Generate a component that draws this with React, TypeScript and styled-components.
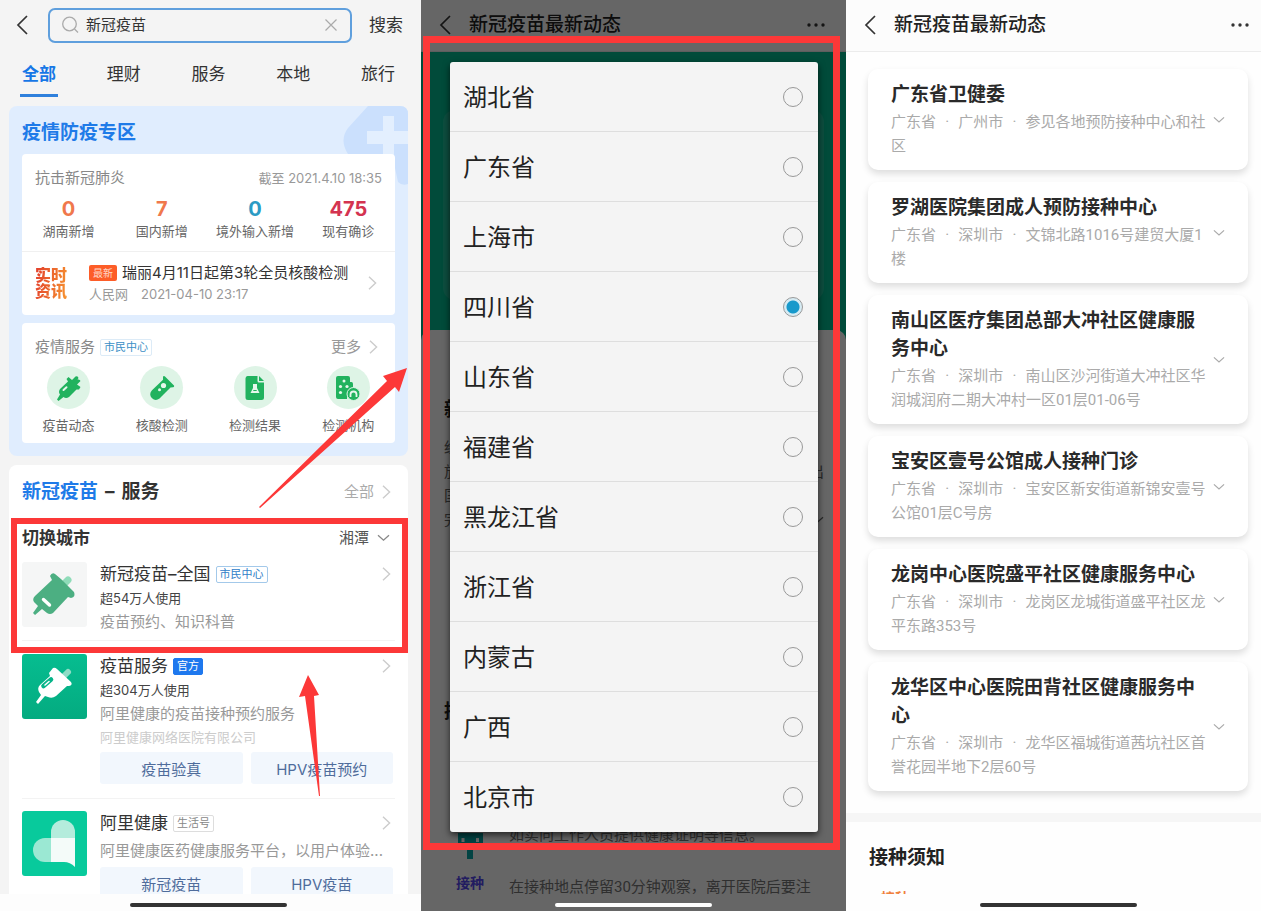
import React from "react";
import styled, { createGlobalStyle } from "styled-components";

const RED = "#fc3838";

const GlobalStyle = createGlobalStyle`
  * { box-sizing: border-box; }
  body { margin: 0; background: #fff; }
  button, input { font: inherit; color: inherit; }
  button { border: 0; padding: 0; background: none; cursor: pointer; }
  h1, h2, h3, p, fieldset { margin: 0; padding: 0; border: 0; }
  a { color: inherit; text-decoration: none; }
  svg { display: block; flex-shrink: 0; }
`;

const Board = styled.main`
  display: grid;
  grid-template-columns: 421fr 425fr 415fr;
  height: 100vh;
  overflow: hidden;
  font-family: Roboto, "Noto Sans CJK SC", sans-serif;
`;

const Screen = styled.section<{ $bg: string; $round?: boolean }>`
  position: relative;
  display: flex;
  flex-direction: column;
  min-width: 0;
  min-height: 0;
  overflow: hidden;
  background: ${(p) => p.$bg};
  font-family: ${(p) => (p.$round ? 'Inter, "Noto Sans CJK SC", sans-serif' : "inherit")};
`;

const ScreenBody = styled.div`
  flex: 1;
  min-height: 0;
  overflow: hidden;
`;

const HomeArea = styled.div<{ $bg?: string; $pad?: string }>`
  position: relative;
  z-index: 3;
  flex-shrink: 0;
  display: flex;
  align-items: center;
  justify-content: center;
  height: 17px;
  padding: ${(p) => p.$pad ?? "5px 0 0"};
  background: ${(p) => p.$bg ?? "transparent"};
`;

const HomeBar = styled.div<{ $color: string }>`
  width: 157px;
  height: 4px;
  border-radius: 2px;
  background: ${(p) => p.$color};
`;

/* ---------- search screen ---------- */

const SearchHeader = styled.header`
  display: flex;
  align-items: center;
  height: 50px;
  padding: 0 18px 0 16px;
`;

const SearchField = styled.label`
  flex: 1;
  min-width: 0;
  display: flex;
  align-items: center;
  gap: 7px;
  height: 35px;
  margin: 0 17px 0 20px;
  padding: 0 13px 0 12px;
  border: 2px solid #5f9fdd;
  border-radius: 7px;
`;

const SearchInput = styled.input`
  flex: 1;
  min-width: 0;
  border: 0;
  padding: 0;
  outline: 0;
  background: none;
  font-size: 15px;
  line-height: 24px;
  color: #333;
`;

const SearchButton = styled.button`
  font-size: 17px;
  line-height: 24px;
  color: #333;
`;

const Tabs = styled.nav`
  display: flex;
  justify-content: space-between;
  padding: 0 24px 0 20px;
`;

const Tab = styled.button<{ $active?: boolean }>`
  width: 38px;
  padding-top: 5px;
  font-size: 17px;
  line-height: 39px;
  white-space: nowrap;
  display: flex;
  justify-content: center;
  color: ${(p) => (p.$active ? "#1677e6" : "#333")};
  font-weight: ${(p) => (p.$active ? 700 : 400)};
  border-bottom: 3px solid ${(p) => (p.$active ? "#2f80dc" : "transparent")};
`;

const Panel = styled.section<{ $bg: string; $top: number }>`
  position: relative;
  margin: ${(p) => p.$top}px 13px 0 9px;
  padding: 13px;
  border-radius: 8px;
  background: ${(p) => p.$bg};
`;

const PanelDeco = styled.svg`
  position: absolute;
  top: 0;
  right: 0;
`;

const PanelTitle = styled.h2<{ $color?: string }>`
  position: relative;
  display: flex;
  gap: 7px;
  font-size: 19px;
  line-height: 28px;
  font-weight: 700;
  color: ${(p) => p.$color ?? "#333"};
`;

const Blue = styled.span`
  color: #1f7be8;
`;

const Card = styled.div<{ $top: number }>`
  position: relative;
  margin-top: ${(p) => p.$top}px;
  padding-top: 12px;
  border-radius: 4px;
  background: #fff;
`;

const Row = styled.div<{ $pad?: string }>`
  display: flex;
  align-items: center;
  justify-content: space-between;
  padding: ${(p) => p.$pad ?? "0"};
`;

const Inline = styled.div<{ $gap?: number }>`
  display: flex;
  align-items: center;
  gap: ${(p) => p.$gap ?? 5}px;
`;

const Text = styled.span<{ $size: number; $color: string; $line?: number; $bold?: boolean }>`
  font-size: ${(p) => p.$size}px;
  line-height: ${(p) => p.$line ?? 24}px;
  color: ${(p) => p.$color};
  font-weight: ${(p) => (p.$bold ? 700 : 400)};
  white-space: nowrap;
`;

const LinkRow = styled.a<{ $color: string }>`
  display: flex;
  align-items: center;
  gap: 8px;
  font-size: 15px;
  line-height: 24px;
  color: ${(p) => p.$color};
`;

const Four = styled.div<{ $pad: string }>`
  display: grid;
  grid-template-columns: repeat(4, 1fr);
  justify-items: center;
  padding: ${(p) => p.$pad};
`;

const Stat = styled.div<{ $color: string }>`
  display: flex;
  flex-direction: column;
  align-items: center;
  font-size: 13px;
  line-height: 20px;
  color: #666;
  white-space: nowrap;
  strong {
    font-size: 20px;
    line-height: 24px;
    font-weight: 700;
    color: ${(p) => p.$color};
  }
`;

const News = styled.a`
  display: flex;
  align-items: center;
  height: 64px;
  padding: 0 18px 2px 13px;
  border-top: 1px solid #f0f0f0;
`;

const NewsLogo = styled.div`
  width: 33px;
  margin-right: 21px;
  font-size: 16px;
  line-height: 16px;
  font-weight: 900;
  color: transparent;
  background: linear-gradient(100deg, #e23d2c, #f7962f);
  background-clip: text;
  -webkit-background-clip: text;
`;

const NewsText = styled.div`
  flex: 1;
  min-width: 0;
  display: flex;
  flex-direction: column;
`;

const HotTag = styled.span`
  width: 28px;
  border-radius: 2px;
  background: #fd5d28;
  color: #ffd9c8;
  font-size: 10px;
  line-height: 16px;
  text-align: center;
`;

const Tag = styled.span<{ $tone: "light" | "blue" | "solid" | "grey" }>`
  padding: 0 3px;
  border: 1px solid
    ${(p) => ({ light: "#dcebf7", blue: "#a3c9ea", solid: "#1e78ee", grey: "#ddd" })[p.$tone]};
  border-radius: 2px;
  background: ${(p) => (p.$tone === "solid" ? "#1e78ee" : "#fff")};
  color: ${(p) => ({ light: "#3a8fc6", blue: "#2f80c8", solid: "#fff", grey: "#888" })[p.$tone]};
  font-size: 11px;
  line-height: 15px;
  white-space: nowrap;
`;

const Service = styled.a`
  display: flex;
  flex-direction: column;
  align-items: center;
  gap: 6px;
  font-size: 13px;
  line-height: 20px;
  color: #666;
`;

const Disc = styled.span`
  display: grid;
  place-items: center;
  width: 43px;
  height: 43px;
  border-radius: 50%;
  background: #def4e6;
`;

const CitySection = styled.div`
  position: relative;
  margin-top: 20px;
`;

const CityFrame = styled.div`
  position: absolute;
  inset: -8px -13px -12px -11px;
  z-index: 2;
  border: 6px solid ${RED};
  pointer-events: none;
`;

const Item = styled.article<{ $pad: string; $line?: boolean }>`
  display: flex;
  align-items: flex-start;
  gap: 13px;
  padding: ${(p) => p.$pad};
  border-bottom: ${(p) => (p.$line ? "1px solid #f3f3f3" : "0")};
`;

const ItemBody = styled.div`
  flex: 1;
  min-width: 0;
  display: flex;
  flex-direction: column;
`;

const Desc = styled.p<{ $top?: number }>`
  margin-top: ${(p) => p.$top ?? 0}px;
  font-size: 15px;
  line-height: 24px;
  color: #999;
  white-space: nowrap;
`;

const Actions = styled.div`
  display: grid;
  grid-template-columns: 1fr 1fr;
  gap: 8px;
  margin: 4px 2px 0 0;
`;

const Action = styled.button`
  height: 32px;
  border-radius: 3px;
  background: #f2f7fd;
  color: #4f6c9b;
  font-size: 15px;
`;

const Arrow = styled.svg<{ $x: number; $y: number }>`
  position: absolute;
  z-index: 4;
  left: ${(p) => p.$x}px;
  top: ${(p) => p.$y}px;
  pointer-events: none;
`;

/* ---------- vaccine news screens ---------- */

const TitleBar = styled.header<{ $bg: string; $right: number }>`
  flex-shrink: 0;
  display: flex;
  align-items: center;
  height: 52px;
  padding: 0 ${(p) => p.$right}px 1px 18px;
  border-bottom: 1px solid #ececec;
  background: ${(p) => p.$bg};
`;

const BarTitle = styled.h1`
  flex: 1;
  margin-left: 18px;
  font-size: 19px;
  line-height: 28px;
  font-weight: 500;
  color: #222;
`;

const Hero = styled.div`
  height: 290px;
  padding: 58px 22px 0;
  background: #03bc91;
`;

const HeroCard = styled.div`
  height: 190px;
  border-radius: 12px;
  background: rgba(255, 255, 255, 0.12);
`;

const Sheet = styled.div`
  position: relative;
  margin-top: -12px;
  padding: 66px 22px 0 23px;
  border-radius: 10px 10px 0 0;
  background: #fff;
`;

const SheetHeading = styled.h2<{ $top?: number }>`
  margin-top: ${(p) => p.$top ?? 0}px;
  font-size: 19px;
  line-height: 28px;
  font-weight: 700;
  color: #222;
`;

const SheetText = styled.div`
  margin-top: 12px;
`;

const SheetLine = styled.p`
  display: flex;
  align-items: center;
  justify-content: space-between;
  font-size: 15px;
  line-height: 24px;
  color: #666;
`;

const Notice = styled.div<{ $top: number }>`
  display: flex;
  align-items: flex-start;
  gap: 24px;
  margin-top: ${(p) => p.$top}px;
  padding-left: 12px;
  font-size: 15px;
  line-height: 24px;
  color: #777;
  white-space: nowrap;
`;

const NoticeMark = styled.span<{ $color: string }>`
  width: 29px;
  font-size: 14px;
  line-height: 16px;
  font-weight: 700;
  color: ${(p) => p.$color};
`;

const Dim = styled.div`
  position: absolute;
  inset: 0;
  z-index: 1;
  background: rgba(0, 0, 0, 0.6);
`;

const DialogFrame = styled.div`
  position: absolute;
  z-index: 2;
  top: 36px;
  left: 2px;
  right: 6px;
  padding: 19px 15px 11px 20px;
  border: 7px solid ${RED};
`;

const Dialog = styled.fieldset`
  min-width: 0;
  border-radius: 3px;
  background: #f4f4f4;
  box-shadow: 0 3px 7px rgba(0, 0, 0, 0.65);
`;

const Option = styled.label`
  display: flex;
  align-items: center;
  justify-content: space-between;
  height: 70px;
  padding: 0 15px 0 13px;
  font-size: 24px;
  line-height: 32px;
  color: #222;
  border-bottom: 1px solid #dedede;
  &:last-child { border-bottom-color: transparent; }
`;

const OptionName = styled.span`
  padding-top: 2px;
`;

const Radio = styled.input`
  appearance: none;
  width: 20px;
  height: 20px;
  margin: 0;
  border: 1px solid #999;
  border-radius: 50%;
  &:checked {
    background: radial-gradient(circle, #1799cb 0 6px, #d6ebf3 7px);
  }
`;

const ClinicList = styled.div`
  display: flex;
  flex-direction: column;
  gap: 12px;
  padding: 17px 13px 22px 22px;
`;

const Clinic = styled.article`
  display: flex;
  align-items: center;
  justify-content: space-between;
  gap: 5px;
  padding: 12px 23px;
  border-radius: 10px;
  background: #fff;
  box-shadow: 0 4px 7px rgba(0, 0, 0, 0.13);
`;

const ClinicText = styled.div`
  flex: 1;
  min-width: 0;
`;

const ClinicName = styled.h3`
  font-size: 19px;
  line-height: 28px;
  font-weight: 700;
  color: #2a2a2a;
`;

const Address = styled.p`
  margin-top: 1px;
  font-size: 15px;
  line-height: 24px;
  color: #aaa;
`;

const Notes = styled.section`
  padding: 22px 23px 0;
  border-top: 9px solid #f6f6f6;
`;

/* ---------- icons ---------- */

const Back = () => (
  <svg width="12" height="20" viewBox="0 0 12 20" fill="none" stroke="#333" strokeWidth="1.7">
    <path d="M11 1 L2 10 L11 19" />
  </svg>
);

const Right = ({ color = "#ccc" }: { color?: string }) => (
  <svg width="9" height="14" viewBox="0 0 9 14" fill="none" stroke={color} strokeWidth="1.4">
    <path d="M1 0.8 L7.6 7 L1 13.2" />
  </svg>
);

const Down = ({ w = 13, color = "#888" }: { w?: number; color?: string }) => (
  <svg width={w} height="8" viewBox="0 0 13 8" fill="none" stroke={color} strokeWidth="1.3">
    <path d="M1 1.2 L6.5 6.2 L12 1.2" />
  </svg>
);

const Dots = () => (
  <svg width="18" height="4" viewBox="0 0 18 4" fill="#333">
    <circle cx="2" cy="2" r="1.7" />
    <circle cx="9" cy="2" r="1.7" />
    <circle cx="16" cy="2" r="1.7" />
  </svg>
);

const SyringeTile = ({ bg, body, plunger, slot }: { bg: string; body: string; plunger: string; slot: string }) => (
  <svg width="65" height="65" viewBox="0 0 65 65">
    <rect width="65" height="65" rx="3" fill={bg} />
    <path d="M42 22 L46 18" stroke={plunger} strokeWidth="7" strokeLinecap="round" />
    <path
      d="M28 14 Q30 10 33 12 L39 17 L47 25 L52 30 Q54 35 49 36 L46 35 L31 51 Q28 53 25 51 L20 47 L13 53 L11 51 L16 44 L12 40 Q10 37 13 34 L30 18 Z"
      fill={body}
    />
    <path d="M21.5 37.5 L27.5 43" stroke={slot} strokeWidth="3.4" strokeLinecap="round" />
  </svg>
);

const VaccineTile = () => (
  <svg width="65" height="65" viewBox="0 0 65 65">
    <defs>
      <linearGradient id="tile" x1="0" y1="0" x2="0" y2="1">
        <stop offset="0" stopColor="#06bd90" />
        <stop offset="1" stopColor="#04ab80" />
      </linearGradient>
    </defs>
    <rect width="65" height="65" rx="3" fill="url(#tile)" />
    <path d="M42 22 L46 18" stroke="#8fdcc6" strokeWidth="6" strokeLinecap="round" />
    <path
      d="M31 14 Q33 13 35 15 L49 28 Q51 31 47 32 L45 32 L34 42 Q30 45 26 43 L23 42 L16 50 L14 48 L19 41 L17 38 Q15 34 18 31 L28 22 L27 19 Z"
      fill="#fff"
    />
    <path d="M21.5 32 L29 25.5" stroke="#06b489" strokeWidth="4.6" strokeLinecap="round" />
    <path d="M23 31 L27 27.5" stroke="#fff" strokeWidth="1.6" strokeLinecap="round" />
  </svg>
);

const AliHealthTile = () => (
  <svg width="65" height="65" viewBox="0 0 65 65">
    <rect width="65" height="65" rx="3" fill="#08ca9c" />
    <path d="M29 27 H23 A12 12 0 0 0 23 51 H29 Z" fill="#9be8d3" />
    <path d="M29 27 V21 A12 12 0 0 1 53 21 V27 Z" fill="#b4ecdc" />
    <path d="M29 27 H53 V56 Q48 51 42 51 H29 Z" fill="#f4fbf9" />
  </svg>
);

const ServiceIcon = ({ name }: { name: string }) => {
  const g = "#21b25e";
  if (name === "syringe")
    return (
      <svg width="26" height="26" viewBox="0 0 26 26" fill={g}>
        <path d="M10.5 4 L12.5 2 L16 5 L19.5 1.5 Q22 0.5 22.5 3 L21.5 4.5 Q24 4 24.5 6 L21 9.5 L24.5 12 L23 14.5 L20.5 14.5 L13 22 Q10 24 7.5 22 L2.5 26 L1 24.5 L4 19.5 Q2 17 4 14 L12 6.5 Z" />
        <path d="M7.5 15 L10.5 12.2" stroke="#e6f7ec" strokeWidth="2" strokeLinecap="round" />
      </svg>
    );
  if (name === "tube")
    return (
      <svg width="26" height="26" viewBox="0 0 26 26" fill={g}>
        <path d="M14 1.5 Q15 0.5 16 1.5 L25 10.5 Q25.5 12 24 12.2 L21.5 12.5 L10.5 23.5 Q6.5 26.5 2.8 23 Q-0.5 19 3 15.2 L14 4.8 Z" />
        <circle cx="14.5" cy="10.5" r="2.6" fill="#e6f7ec" />
        <circle cx="10.5" cy="14.8" r="1.5" fill="#e6f7ec" />
      </svg>
    );
  if (name === "report")
    return (
      <svg width="20" height="26" viewBox="0 0 20 26" fill={g}>
        <path d="M2.5 1 H12.5 V6 Q12.5 7.5 14 7.5 H19 V22.5 Q19 25 16.5 25 H3 Q0.5 25 0.5 22.5 V3.5 Q0.5 1 2.5 1 Z" />
        <path d="M14 1 L19 6 H14 Z" />
        <path d="M8 9 H12 V13 L14.5 18 H5.5 L8 13 Z" fill="#e6f7ec" />
        <path d="M8.3 15.5 H11.7" stroke={g} strokeWidth="1" />
      </svg>
    );
  return (
    <svg width="26" height="26" viewBox="0 0 26 26" fill={g}>
      <path d="M3 1 H13 Q15 1 15 3 V7 H16.5 Q18 7 18 9 V14 Q12 15 12 24 H3 Q1 24 1 22 V3 Q1 1 3 1 Z" />
      <g fill="#e6f7ec">
        <circle cx="9" cy="6" r="1.5" />
        <circle cx="5.5" cy="11.5" r="1.6" />
        <circle cx="12" cy="11.5" r="1.6" />
        <circle cx="5.5" cy="17.5" r="1.6" />
      </g>
      <circle cx="18.5" cy="19" r="6.5" stroke="#def4e6" strokeWidth="1" />
      <path d="M15.5 22 V19.5 A3 3 0 0 1 21.5 19.5 V22" fill="none" stroke="#e6f7ec" strokeWidth="1.8" />
    </svg>
  );
};

/* ---------- data ---------- */

const tabs = ["全部", "理财", "服务", "本地", "旅行"];
const stats = [
  { value: "0", label: "湖南新增", color: "#f0784c" },
  { value: "7", label: "国内新增", color: "#f0784c" },
  { value: "0", label: "境外输入新增", color: "#2b9bc4" },
  { value: "475", label: "现有确诊", color: "#d43350" },
];
const services = [
  { icon: "syringe", label: "疫苗动态" },
  { icon: "tube", label: "核酸检测" },
  { icon: "report", label: "检测结果" },
  { icon: "site", label: "检测机构" },
];
const provinces = ["湖北省", "广东省", "上海市", "四川省", "山东省", "福建省", "黑龙江省", "浙江省", "内蒙古", "广西", "北京市"];
const clinics = [
  { name: "广东省卫健委", city: "广州市", street: "参见各地预防接种中心和社区" },
  { name: "罗湖医院集团成人预防接种中心", city: "深圳市", street: "文锦北路1016号建贸大厦1楼" },
  { name: "南山区医疗集团总部大冲社区健康服务中心", city: "深圳市", street: "南山区沙河街道大冲社区华润城润府二期大冲村一区01层01-06号" },
  { name: "宝安区壹号公馆成人接种门诊", city: "深圳市", street: "宝安区新安街道新锦安壹号公馆01层C号房" },
  { name: "龙岗中心医院盛平社区健康服务中心", city: "深圳市", street: "龙岗区龙城街道盛平社区龙平东路353号" },
  { name: "龙华区中心医院田背社区健康服务中心", city: "深圳市", street: "龙华区福城街道茜坑社区首誉花园半地下2层60号" },
];

// En space plus hair space on each side of the dot.
const SEPARATOR = "\u2002\u200a·\u200a\u2002";

/* ---------- screens ---------- */

const SearchScreen = () => (
  <Screen $bg="#f4f4f4" $round>
    <ScreenBody>
      <SearchHeader>
        <button aria-label="返回"><Back /></button>
        <SearchField>
          <svg width="17" height="18" viewBox="0 0 17 18" fill="none" stroke="#aaa" strokeWidth="1.3">
            <circle cx="7.5" cy="8" r="6.8" />
            <path d="M12.5 13 L16 16.5" />
          </svg>
          <SearchInput defaultValue="新冠疫苗" aria-label="搜索内容" />
          <svg width="12" height="12" viewBox="0 0 12 12" stroke="#aaa" strokeWidth="1.2">
            <path d="M0.5 0.5 L11.5 11.5 M11.5 0.5 L0.5 11.5" />
          </svg>
        </SearchField>
        <SearchButton>搜索</SearchButton>
      </SearchHeader>
      <Tabs>
        {tabs.map((t, i) => (
          <Tab key={t} $active={i === 0}>{t}</Tab>
        ))}
      </Tabs>

      <Panel $bg="#e0edfe" $top={9}>
        <PanelDeco width="66" height="80" viewBox="0 0 66 80">
          <path d="M26 0 H58 Q66 0 66 8 V78 Q60 80 56 76 L50 48 H6 Q-3 34 6 22 Z" fill="#cbe0fd" />
          <path d="M41 10 H52 V25 H66 V38 H52 V54 H41 V38 H25 V25 H41 Z" fill="#e3effe" />
        </PanelDeco>
        <PanelTitle $color="#1f7be8">疫情防疫专区</PanelTitle>
        <Card $top={7}>
          <Row $pad="0 13px">
            <Text $size={15} $color="#888">抗击新冠肺炎</Text>
            <Text $size={13} $color="#999">截至 2021.4.10 18:35</Text>
          </Row>
          <Four $pad="7px 0 10px">
            {stats.map((s) => (
              <Stat key={s.label} $color={s.color}>
                <strong>{s.value}</strong>
                {s.label}
              </Stat>
            ))}
          </Four>
          <News href="#news">
            <NewsLogo>实时资讯</NewsLogo>
            <NewsText>
              <Inline>
                <HotTag>最新</HotTag>
                <Text $size={15} $line={22} $color="#333">瑞丽4月11日起第3轮全员核酸检测</Text>
              </Inline>
              <Inline $gap={13}>
                <Text $size={13} $line={20} $color="#999">人民网</Text>
                <Text $size={13} $line={20} $color="#999">2021-04-10 23:17</Text>
              </Inline>
            </NewsText>
            <Right />
          </News>
        </Card>
        <Card $top={8}>
          <Row $pad="0 17px 0 13px">
            <Inline>
              <Text $size={15} $color="#888">疫情服务</Text>
              <Tag $tone="light">市民中心</Tag>
            </Inline>
            <LinkRow href="#more" $color="#999">更多 <Right /></LinkRow>
          </Row>
          <Four $pad="7px 0 8px">
            {services.map((s) => (
              <Service key={s.label} href="#service">
                <Disc><ServiceIcon name={s.icon} /></Disc>
                {s.label}
              </Service>
            ))}
          </Four>
        </Card>
      </Panel>

      <Panel $bg="#fff" $top={9}>
        <Row $pad="0 4px 0 0">
          <PanelTitle><Blue>新冠疫苗</Blue><span>–</span><span>服务</span></PanelTitle>
          <LinkRow href="#all" $color="#aaa">全部 <Right /></LinkRow>
        </Row>
        <CitySection>
          <Row $pad="0 5px 0 0">
            <Text $size={17} $color="#333" $bold>切换城市</Text>
            <LinkRow as="button" $color="#555">湘潭 <Down /></LinkRow>
          </Row>
          <Item $pad="12px 0 6px" $line>
            <SyringeTile bg="#f5f6f6" body="#4caf82" plunger="#8fdcb9" slot="#fff" />
            <ItemBody>
              <Row $pad="0 4px 0 0">
                <Inline>
                  <Text $size={17} $color="#333">新冠疫苗–全国</Text>
                  <Tag $tone="blue">市民中心</Tag>
                </Inline>
                <Right />
              </Row>
              <Text $size={13} $color="#444">超54万人使用</Text>
              <Desc>疫苗预约、知识科普</Desc>
            </ItemBody>
          </Item>
          <CityFrame />
        </CitySection>
        <Item $pad="13px 0 14px" $line>
          <VaccineTile />
          <ItemBody>
            <Row $pad="0 4px 0 0">
              <Inline>
                <Text $size={17} $color="#333">疫苗服务</Text>
                <Tag $tone="solid">官方</Tag>
              </Inline>
              <Right />
            </Row>
            <Text $size={13} $color="#444">超304万人使用</Text>
            <Desc>阿里健康的疫苗接种预约服务</Desc>
            <Text $size={13} $line={22} $color="#ccc">阿里健康网络医院有限公司</Text>
            <Actions>
              <Action>疫苗验真</Action>
              <Action>HPV疫苗预约</Action>
            </Actions>
          </ItemBody>
        </Item>
        <Item $pad="12px 0 0">
          <AliHealthTile />
          <ItemBody>
            <Row $pad="0 4px 0 0">
              <Inline>
                <Text $size={17} $color="#333">阿里健康</Text>
                <Tag $tone="grey">生活号</Tag>
              </Inline>
              <Right />
            </Row>
            <Desc $top={4}>阿里健康医药健康服务平台，以用户体验...</Desc>
            <Actions>
              <Action>新冠疫苗</Action>
              <Action>HPV疫苗</Action>
            </Actions>
          </ItemBody>
        </Item>
      </Panel>
    </ScreenBody>
    <HomeArea $bg="#fdfdfd" $pad="5px 4px 0 0"><HomeBar $color="#333" /></HomeArea>
    <Arrow $x={259} $y={368} width="149" height="141" viewBox="0 0 149 141" fill={RED}>
      <path d="M148 0 L124 8 L128 13 L0 139 L1 140 L136 19 L140 24 Z" />
    </Arrow>
    <Arrow $x={299} $y={675} width="22" height="122" viewBox="0 0 22 122" fill={RED}>
      <path d="M9 0 L0 22 L6 21 L20 121 L21 121 L15 21 L20 20 Z" />
    </Arrow>
  </Screen>
);

const PickerScreen = () => (
  <Screen $bg="#fff">
    <ScreenBody>
      <TitleBar $bg="#fff" $right={21}>
        <button aria-label="返回"><Back /></button>
        <BarTitle>新冠疫苗最新动态</BarTitle>
        <button aria-label="更多"><Dots /></button>
      </TitleBar>
      <Hero><HeroCard /></Hero>
      <Sheet>
        <SheetHeading>新</SheetHeading>
        <SheetText>
          <SheetLine>经</SheetLine>
          <SheetLine><span>放</span><span>出</span></SheetLine>
          <SheetLine>国</SheetLine>
          <SheetLine><span>完</span><Down color="#666" /></SheetLine>
        </SheetText>
        <SheetHeading $top={166}>接</SheetHeading>
        <Notice $top={97}>
          <svg width="29" height="36" viewBox="0 0 29 36">
            <path d="M2 10 H27 V24 H17 V36 H11 V24 H2 Z" fill="#06a8a8" />
            <path d="M7 15 V19 M21.5 15 V19" stroke="#fff" strokeWidth="3" />
          </svg>
          如实向工作人员提供健康证明等信息。
        </Notice>
        <Notice $top={16}>
          <NoticeMark $color="#5548f0">接种</NoticeMark>
          在接种地点停留30分钟观察，离开医院后要注
        </Notice>
      </Sheet>
    </ScreenBody>
    <HomeArea><HomeBar $color="#fff" /></HomeArea>
    <Dim />
    <DialogFrame>
      <Dialog aria-label="选择省份">
        {provinces.map((p) => (
          <Option key={p}>
            <OptionName>{p}</OptionName>
            <Radio type="radio" name="province" defaultChecked={p === "四川省"} />
          </Option>
        ))}
      </Dialog>
    </DialogFrame>
  </Screen>
);

const ClinicScreen = () => (
  <Screen $bg="#fefefe">
    <ScreenBody>
      <TitleBar $bg="#fcfcfc" $right={12}>
        <button aria-label="返回"><Back /></button>
        <BarTitle>新冠疫苗最新动态</BarTitle>
        <button aria-label="更多"><Dots /></button>
      </TitleBar>
      <ClinicList>
        {clinics.map((c) => (
          <Clinic key={c.name}>
            <ClinicText>
              <ClinicName>{c.name}</ClinicName>
              <Address>{["广东省", c.city, c.street].join(SEPARATOR)}</Address>
            </ClinicText>
            <button aria-label="展开"><Down w={12} color="#aaa" /></button>
          </Clinic>
        ))}
      </ClinicList>
      <Notes>
        <SheetHeading>接种须知</SheetHeading>
        <Notice $top={18}><NoticeMark $color="#f0803c">接种</NoticeMark></Notice>
      </Notes>
    </ScreenBody>
    <HomeArea $pad="5px 0 0 10px"><HomeBar $color="#333" /></HomeArea>
  </Screen>
);

export default function App() {
  return (
    <>
      <GlobalStyle />
      <Board>
        <SearchScreen />
        <PickerScreen />
        <ClinicScreen />
      </Board>
    </>
  );
}
